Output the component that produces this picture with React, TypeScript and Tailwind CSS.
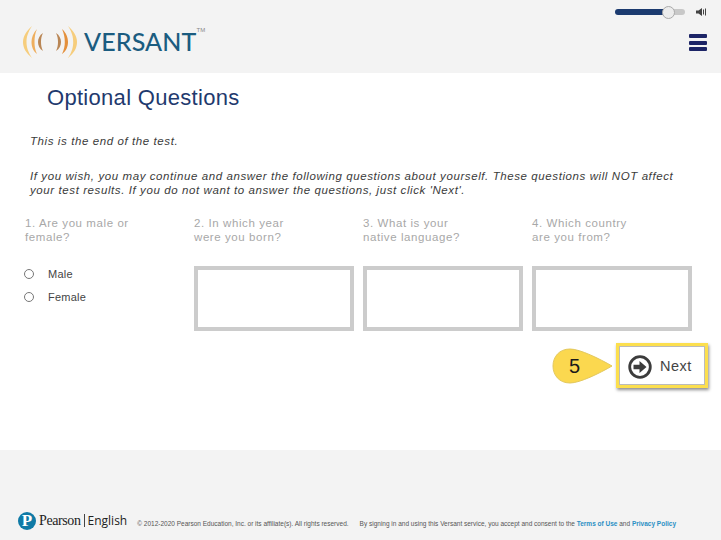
const questions = [
  ["2. In which year", "were you born?"],
  ["3. What is your", "native language?"],
  ["4. Which country", "are you from?"],
];

function VersantLogo() {
  return (
    <div className="flex items-start">
      <svg width="58" height="34" viewBox="0 0 58 34" className="mt-[25px] ml-[22px]">
        <path d="M10 1C4 6 1 12 1 17C1 23 4 28 10 33C6 27 4.5 22 4.5 17C4.5 12 6 7 10 1z" fill="#f6cd7c" />
        <path d="M15 4C11 8 9.5 13 9.5 17C9.5 21 11 26 15 29C13 25 12.5 21 12.5 17C12.5 13 13 8 15 4z" fill="#eeae5e" />
        <path d="M21 8C17.5 10 16 14 16 17C16 20 17.5 24 21 26C19.5 23 19 20 19 17C19 14 19.5 11 21 8z" fill="#b98655" />
        <path d="M34 8C37.5 10 39 14 39 17C39 20 37.5 24 34 26C35.5 23 36 20 36 17C36 14 35.5 11 34 8z" fill="#b98655" />
        <path d="M40 4C44.5 8 46 13 46 17C46 21 44.5 26 40 29C42 25 42.8 21 42.8 17C42.8 13 42 8 40 4z" fill="#e4903c" />
        <path d="M46 1C52 6 55 12 55 17C55 23 52 28 46 33C50 27 51.2 22 51.2 17C51.2 12 50 7 46 1z" fill="#f6cd7c" />
      </svg>
      <span className="mt-[26px] ml-[4px] font-['Lato',sans-serif] text-[25px] font-medium leading-[30px] tracking-[0.15px] text-[#1b5c80]">VERSANT</span>
      <span className="mt-[26px] text-[6px] leading-[8px] text-[#8a8a8a] font-['Liberation_Sans',sans-serif]">TM</span>
    </div>
  );
}

function VolumeAndMenu() {
  return (
    <div className="flex flex-col items-end pr-[14px] pt-[5px]">
      <div className="flex items-center">
        <div className="flex h-[14px] w-[71px] items-center">
          <div className="h-[6px] w-[48px] rounded-l-full bg-[#1b3a6f]" />
          <div className="z-10 -mx-[1px] h-[13px] w-[13px] shrink-0 rounded-full border border-[#aaaaaa] bg-[#ececec]" />
          <div className="h-[6px] w-[11px] rounded-r-full bg-[#c8c8c8]" />
        </div>
        <svg width="11" height="8" viewBox="0 0 11 8" className="ml-[10px]">
          <path d="M0 2.5h2.5L6 0v8L2.5 5.5H0z" fill="#444" />
          <path d="M7.5 1.5v5M9.5 0.5v7" stroke="#444" strokeWidth="1" />
        </svg>
      </div>
      <div className="mt-[15px] flex flex-col gap-[2.5px]">
        <div className="h-[4px] w-[18px] rounded-[1px] bg-[#1c2466]" />
        <div className="h-[4px] w-[18px] rounded-[1px] bg-[#1c2466]" />
        <div className="h-[4px] w-[18px] rounded-[1px] bg-[#1c2466]" />
      </div>
    </div>
  );
}

function Radio({ label }: { label: string }) {
  return (
    <div className="flex h-[23px] items-center">
      <span className="mb-[2px] ml-[-1px] h-[10px] w-[10px] rounded-full border border-[#777777] bg-white" />
      <span className="ml-[14px] text-[11px] tracking-[0.25px] text-[#444444]">{label}</span>
    </div>
  );
}

function PearsonLogo() {
  return (
    <div className="flex items-center">
      <span className="flex h-[18px] w-[18px] items-center justify-center rounded-full bg-[#0f7aa6] font-['Liberation_Serif',serif] text-[17px] font-bold leading-none text-white">P</span>
      <span className="ml-[3px] font-['Liberation_Serif',serif] text-[14px] tracking-[-0.4px] text-[#222222]">Pearson</span>
      <span className="mx-[3px] h-[13px] w-px bg-[#444444]" />
      <span className="font-['Open_Sans',sans-serif] text-[12px] text-[#222222]">English</span>
    </div>
  );
}

export default function App() {
  return (
    <div className="flex h-[540px] w-[721px] flex-col overflow-hidden bg-white font-['Liberation_Sans',Arial,sans-serif]">
      <header className="flex h-[73px] shrink-0 items-start justify-between bg-[#f3f3f3]">
        <VersantLogo />
        <VolumeAndMenu />
      </header>

      <main className="flex-1 pt-[12px]">
        <h1 className="pl-[47px] text-[22px] leading-[26px] tracking-[0.3px] text-[#1f3a6e]">Optional Questions</h1>

        <div className="mt-[23px] pl-[30px] text-[11.5px] italic leading-[14px] tracking-[0.59px] text-[#3b3b3b]">
          <p>This is the end of the test.</p>
          <p className="mt-[21px]">If you wish, you may continue and answer the following questions about yourself. These questions will NOT affect</p>
          <p>your test results. If you do not want to answer the questions, just click 'Next'.</p>
        </div>

        <div className="mt-[19px] flex pl-[25px]">
          <div className="w-[169px] shrink-0">
            <p className="text-[11.5px] leading-[14px] tracking-[0.58px] text-[#a8a8a8]">1. Are you male or<br />female?</p>
            <div className="mt-[19px]">
              <Radio label="Male" />
              <Radio label="Female" />
            </div>
          </div>
          {questions.map(([a, b]) => (
            <div key={a} className="mr-[9px] w-[160px] shrink-0">
              <p className="text-[11.5px] leading-[14px] tracking-[0.58px] text-[#a8a8a8]">{a}<br />{b}</p>
              <div className="mt-[22px] h-[65px] border-[4px] border-[#cccccc] bg-white" />
            </div>
          ))}
        </div>

        <div className="mt-[12px] flex items-center justify-end pr-[13px]">
          <div className="relative h-[36px] w-[64px]">
            <svg width="64" height="36" viewBox="0 0 64 36" className="block">
              <path d="M18 1C28 1 48 11 60 18C48 25 28 35 18 35C7 35 1 27 1 18C1 9 7 1 18 1z" fill="#fbd84f" stroke="#e3c85c" />
            </svg>
            <span className="absolute left-[17px] top-[7px] text-[20px] leading-[22px] text-[#1a1a1a]">5</span>
          </div>
          <div className="flex h-[45px] w-[92px] items-center border-[3px] border-[#fcdf4e] bg-white pl-[9px] shadow-[1px_2px_3px_rgba(0,0,0,0.45),inset_0_0_0_1px_#bbbbbb]">
            <svg width="24" height="24" viewBox="0 0 24 24" className="mt-[2px]">
              <circle cx="12" cy="12" r="10.3" fill="none" stroke="#3c3c3c" strokeWidth="2.8" />
              <path d="M5.5 9.8h6V6l7 6-7 6v-3.8h-6z" fill="#3c3c3c" />
            </svg>
            <span className="ml-[8px] mt-[2px] text-[14.5px] tracking-[0.5px] text-[#444444]">Next</span>
          </div>
        </div>
      </main>

      <footer className="flex h-[90px] shrink-0 items-end bg-[#f3f3f3] pb-[9px] pl-[18px]">
        <PearsonLogo />
        <p className="mb-[3px] ml-[10px] text-[6.5px] leading-[8px] text-[#555555]">© 2012-2020 Pearson Education, Inc. or its affiliate(s). All rights reserved.</p>
        <p className="mb-[3px] ml-[11px] text-[6.5px] leading-[8px] text-[#555555]">
          By signing in and using this Versant service, you accept and consent to the{" "}
          <span className="font-bold text-[#2a8fc4]">Terms of Use</span> and{" "}
          <span className="font-bold text-[#2a8fc4]">Privacy Policy</span>
        </p>
      </footer>
    </div>
  );
}
